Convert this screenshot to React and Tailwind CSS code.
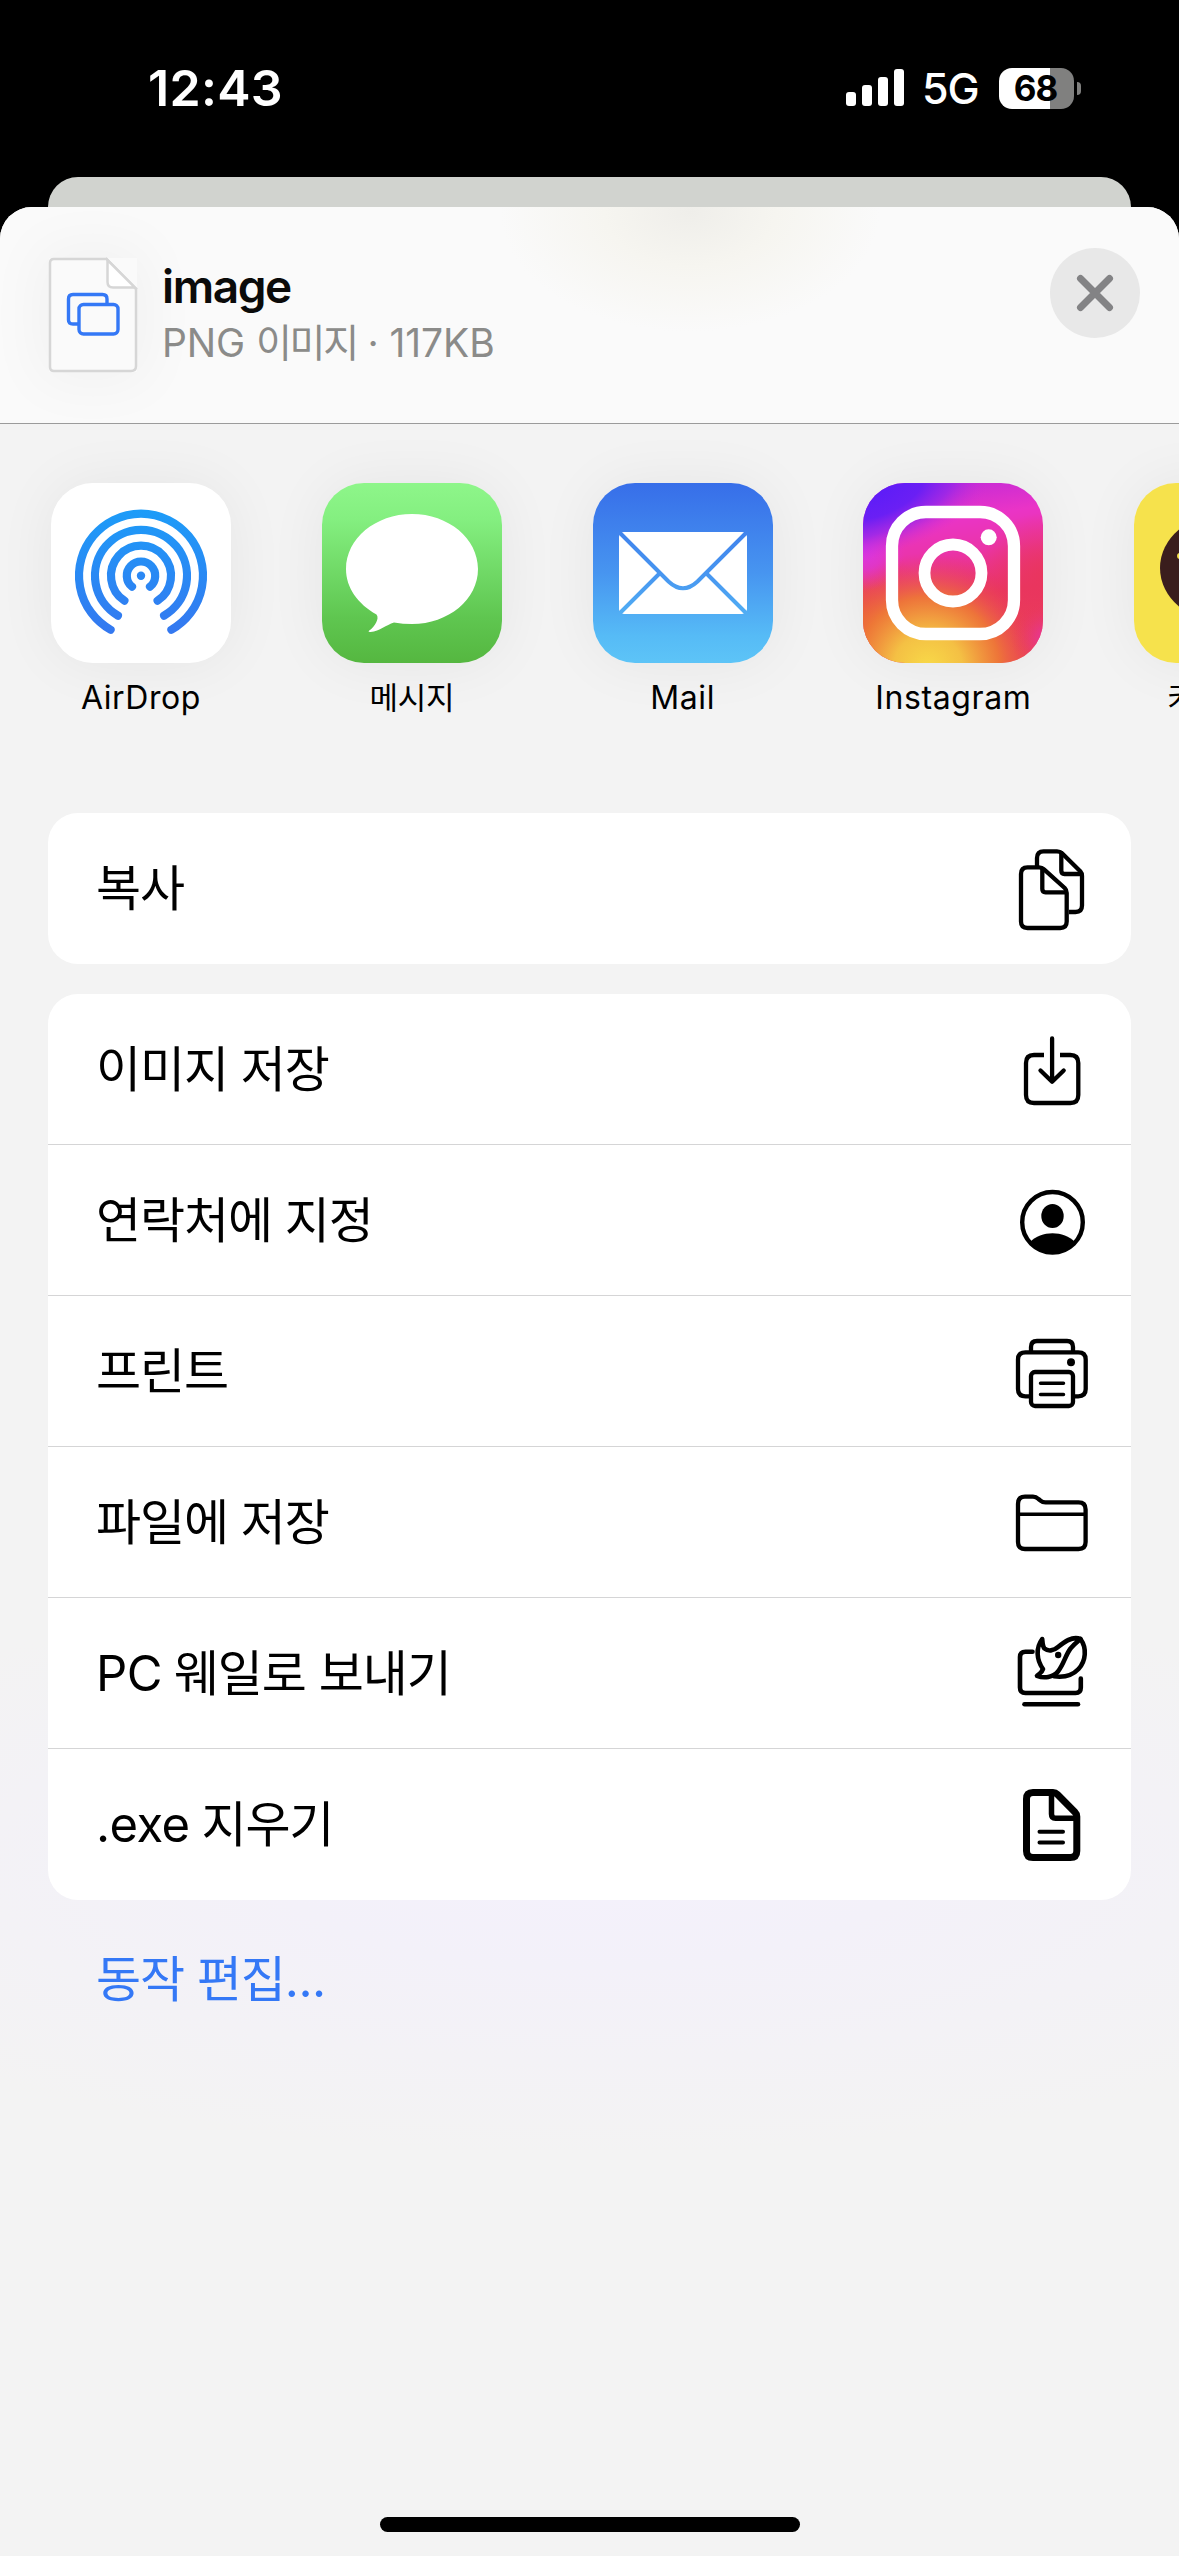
import React from "react";

const LATIN = "font-['Inter','Noto_Sans_CJK_KR',sans-serif]";
const KOREAN = "font-['Noto_Sans_CJK_KR',sans-serif]";

function StatusBar() {
  return (
    <div className="flex h-[177px] shrink-0 items-start justify-between pl-[148px] pr-[98px] pt-[62px] text-white">
      <div className="h-[52px] text-[50px] font-semibold leading-[52px] tracking-[0.3px]">12:43</div>
      <div className="flex h-[52px] items-center">
        <div className="mt-[-1px] flex h-[37px] items-end gap-[6px]">
          <span className="h-[14px] w-[10px] rounded-[3px] bg-white" />
          <span className="h-[21px] w-[10px] rounded-[3px] bg-white" />
          <span className="h-[29px] w-[10px] rounded-[3px] bg-white" />
          <span className="h-[37px] w-[10px] rounded-[3px] bg-white" />
        </div>
        <div className="ml-[18px] w-[57px] whitespace-nowrap text-[43px] font-[450] leading-[52px] tracking-[-1.2px]">5G</div>
        <div className="ml-[20px] flex h-[41px] w-[75px] items-center justify-center rounded-[13px] bg-[linear-gradient(to_right,#fff_51px,#80807f_51px)]">
          <span className="mr-[2px] text-[35px] font-bold leading-none tracking-[-1px] text-black">68</span>
        </div>
        <div className="ml-[3px] h-[13px] w-[4px] rounded-r-full bg-[#80807f]" />
      </div>
    </div>
  );
}

function FileThumb() {
  return (
    <svg className="size-full overflow-visible" viewBox="0 0 88 114" fill="none">
      <path
        d="M5 1H57.500L87 31V108Q87 113 82 113H5Q1 113 1 109V5Q1 1 5 1Z"
        fill="#fafafa"
        stroke="#d6d6d6"
        strokeWidth="2.500"
      />
      <path d="M58.500 2V24Q58.500 29.500 64 29.500H86Z" fill="#fff" stroke="#d6d6d6" strokeWidth="2.500" />
      <path d="M58 45V41Q58 36.500 53.500 36.500H24Q19.500 36.500 19.500 41V62Q19.500 66 24 66H29" stroke="#3478f6" strokeWidth="3.400" />
      <rect x="30" y="46.500" width="39" height="29.500" rx="4.500" stroke="#3478f6" strokeWidth="3.400" />
    </svg>
  );
}

function Header() {
  return (
    <div className="flex h-[217px] shrink-0 items-start border-b border-[#9b9b9b] bg-[radial-gradient(ellipse_190px_120px_at_690px_5px,#efeeea_0%,#f6f5f0_45%,rgba(250,250,250,0)_100%)] bg-[#fafafa] pl-[49px] pr-[39px]">
      <div className="mt-[51px] h-[114px] w-[88px] shadow-[0_0_60px_10px_rgba(0,0,0,0.04)]">
        <FileThumb />
      </div>
      <div className="ml-[25px] mt-[50px] flex-1">
        <div className="h-[60px] text-[46px] font-semibold leading-[58px] tracking-[-1.4px] text-[#0b0b0a]">image</div>
        <div className="h-[52px] whitespace-nowrap text-[39px] leading-[52px] tracking-[-0.1px] text-[#8b8b89]">
          PNG <span className="tracking-[-2.300px]">이미지</span> · 117KB
        </div>
      </div>
      <button className="mt-[41px] flex size-[90px] items-center justify-center rounded-full bg-[#e8e8e8]">
        <svg className="size-[38px]" viewBox="0 0 38 38" fill="none" stroke="#838385" strokeWidth="7" strokeLinecap="round">
          <path d="M4.500 4.500L33.500 33.500M33.500 4.500L4.500 33.500" />
        </svg>
      </button>
    </div>
  );
}

function AirDropIcon() {
  return (
    <svg className="size-full" viewBox="0 0 180 180" fill="none">
      <defs>
        <linearGradient id="air" gradientUnits="userSpaceOnUse" x1="0" y1="27" x2="0" y2="150">
          <stop offset="0" stopColor="#1d9cf8" />
          <stop offset="1" stopColor="#3478f0" />
        </linearGradient>
      </defs>
      <rect width="180" height="180" fill="#fff" />
      <g stroke="url(#air)" strokeWidth="8.200" strokeLinecap="round">
        <path d="M59.600 146.700A62 62 0 1 1 120.400 146.700" />
        <path d="M66.900 132.600A46 46 0 1 1 113.100 132.600" />
        <path d="M73.400 117.700A30 30 0 1 1 106.600 117.700" />
        <path d="M81 103.700A14.200 14.200 0 1 1 99 103.700" />
      </g>
      <circle cx="90" cy="92.700" r="4.200" fill="#2b88f4" />
    </svg>
  );
}

function MessagesIcon() {
  return (
    <svg className="size-full" viewBox="0 0 180 180">
      <defs>
        <linearGradient id="msg" x1="0" y1="0" x2="0" y2="1">
          <stop offset="0" stopColor="#8ef68a" />
          <stop offset="0.200" stopColor="#84ef80" />
          <stop offset="0.750" stopColor="#5fc650" />
          <stop offset="1" stopColor="#55b740" />
        </linearGradient>
      </defs>
      <rect width="180" height="180" fill="url(#msg)" />
      <path
        d="M90 31C126.500 31 156 55.600 156 86S126.500 141 90 141C84 141 78 140.500 72 139.500C64 142 58 148 48.500 149C46 149 46.500 148 48 147C52 144 58 136 54.500 131.500C36 121 24 105 24 86C24 55.600 53.500 31 90 31Z"
        fill="#fff"
      />
    </svg>
  );
}

function MailIcon() {
  return (
    <svg className="size-full" viewBox="0 0 180 180" fill="none">
      <defs>
        <linearGradient id="mail" gradientUnits="userSpaceOnUse" x1="0" y1="0" x2="0" y2="180">
          <stop offset="0" stopColor="#376ee9" />
          <stop offset="0.500" stopColor="#4795f0" />
          <stop offset="0.850" stopColor="#56bbf6" />
          <stop offset="1" stopColor="#5dc4f7" />
        </linearGradient>
      </defs>
      <rect width="180" height="180" fill="url(#mail)" />
      <rect x="26" y="49" width="128" height="82" rx="5" fill="#fff" />
      <path
        d="M26 49L75.500 98.500Q90 112 104.500 98.500L154 49M26 131L66.500 90.500M154 131L113.500 90.500"
        stroke="url(#mail)"
        strokeWidth="4"
      />
    </svg>
  );
}

function InstagramIcon() {
  return (
    <svg className="size-full" viewBox="0 0 180 180" fill="none">
      <defs>
        <linearGradient id="igBase" x1="0.350" y1="0" x2="0.500" y2="1">
          <stop offset="0" stopColor="#c32ad8" />
          <stop offset="0.220" stopColor="#ea34c6" />
          <stop offset="0.400" stopColor="#ea34a8" />
          <stop offset="0.650" stopColor="#e9355e" />
          <stop offset="1" stopColor="#ea4a50" />
        </linearGradient>
        <radialGradient id="igYellow" gradientUnits="userSpaceOnUse" cx="65" cy="185" r="115">
          <stop offset="0" stopColor="#f8da48" />
          <stop offset="0.300" stopColor="#f4c044" />
          <stop offset="0.620" stopColor="#ee7a36" stopOpacity="0.900" />
          <stop offset="1" stopColor="#e9355e" stopOpacity="0" />
        </radialGradient>
        <radialGradient id="igOrange" gradientUnits="userSpaceOnUse" cx="0" cy="135" r="70">
          <stop offset="0" stopColor="#ea6a2a" />
          <stop offset="1" stopColor="#e9355e" stopOpacity="0" />
        </radialGradient>
        <radialGradient
          id="igViolet"
          gradientUnits="userSpaceOnUse"
          cx="0"
          cy="0"
          r="1"
          gradientTransform="translate(8 8) rotate(-18) scale(135 66)"
        >
          <stop offset="0" stopColor="#5b1cf8" />
          <stop offset="0.400" stopColor="#6a1ff4" />
          <stop offset="0.650" stopColor="#9326ea" stopOpacity="0.800" />
          <stop offset="1" stopColor="#d82fd0" stopOpacity="0" />
        </radialGradient>
        <radialGradient id="igMagenta" gradientUnits="userSpaceOnUse" cx="0" cy="66" r="42">
          <stop offset="0" stopColor="#d837e6" />
          <stop offset="0.500" stopColor="#dc36da" stopOpacity="0.700" />
          <stop offset="1" stopColor="#e632cb" stopOpacity="0" />
        </radialGradient>
        <radialGradient id="igRed" gradientUnits="userSpaceOnUse" cx="180" cy="95" r="65">
          <stop offset="0" stopColor="#e9355e" />
          <stop offset="1" stopColor="#e9355e" stopOpacity="0" />
        </radialGradient>
        <radialGradient id="igPink" gradientUnits="userSpaceOnUse" cx="184" cy="155" r="36">
          <stop offset="0" stopColor="#e832a8" />
          <stop offset="1" stopColor="#e9355e" stopOpacity="0" />
        </radialGradient>
      </defs>
      <rect width="180" height="180" fill="url(#igBase)" />
      <rect width="180" height="180" fill="url(#igRed)" />
      <rect width="180" height="180" fill="url(#igOrange)" />
      <rect width="180" height="180" fill="url(#igYellow)" />
      <rect width="180" height="180" fill="url(#igMagenta)" />
      <rect width="180" height="180" fill="url(#igViolet)" />
      <rect width="180" height="180" fill="url(#igPink)" />
      <rect x="29" y="29" width="122" height="122" rx="34" stroke="#fff" strokeWidth="12.300" />
      <circle cx="90" cy="90" r="28.500" stroke="#fff" strokeWidth="11.800" />
      <circle cx="125.700" cy="54.300" r="8" fill="#fff" />
    </svg>
  );
}

function KakaoIcon() {
  return (
    <svg className="size-full" viewBox="0 0 180 180">
      <rect width="180" height="180" fill="#f6e24c" />
      <ellipse cx="90" cy="85" rx="64" ry="54" fill="#3a1d1d" />
      <path d="M58 130L54 156L84 137Z" fill="#3a1d1d" />
      <rect x="43" y="70" width="26" height="6" rx="3" fill="#f6e24c" />
    </svg>
  );
}

const apps = [
  { name: "AirDrop", Icon: AirDropIcon, label: "text-[32px] tracking-[0.6px]" },
  { name: "메시지", Icon: MessagesIcon, label: "text-[31px] tracking-[-0.3px]" },
  { name: "Mail", Icon: MailIcon, label: "text-[32px] tracking-[0.6px]" },
  { name: "Instagram", Icon: InstagramIcon, label: "text-[32px] tracking-[0.6px]" },
  { name: "카카오톡", Icon: KakaoIcon, label: "text-[31px] tracking-[-0.1px]" },
];

function AppRow() {
  return (
    <div className="flex h-[389px] shrink-0 gap-[90.800px] overflow-hidden pl-[51px] pt-[59px]">
      {apps.map(({ name, Icon, label }) => (
        <div key={name} className="flex w-[180px] shrink-0 flex-col items-center">
          <div className="size-[180px] rounded-[42px] shadow-[0_0_60px_rgba(0,0,0,0.06)]">
            <div className="size-full overflow-hidden rounded-[42px]">
              <Icon />
            </div>
          </div>
          <div className={`mt-[13px] h-[44px] whitespace-nowrap leading-[44px] text-black ${label}`}>{name}</div>
        </div>
      ))}
    </div>
  );
}

function Glyph({ children, width = 4.3 }) {
  return (
    <svg
      className="mt-[30px] size-[90px] shrink-0"
      viewBox="0 0 90 90"
      fill="none"
      stroke="#000"
      strokeWidth={width}
      strokeLinecap="round"
      strokeLinejoin="round"
    >
      {children}
    </svg>
  );
}

const CopyGlyph = () => (
  <Glyph>
    <path strokeLinecap="butt" d="M30 23V15Q30 8.300 36.500 8.300H50Q53 8.300 55 10.300L73.500 28.500Q75 30 75 33V62.500Q75 69 68.500 69H62" />
    <path d="M54.300 10V27.500Q54.300 31 57.500 31H74" />
    <path d="M20.500 24.300H32Q35 24.300 37 26.300L57.700 45Q59.700 47 59.700 50V78.500Q59.700 85 53.200 85H20.500Q14 85 14 78.500V31Q14 24.300 20.500 24.300Z" />
    <path d="M35.300 26V46Q35.300 49.300 38.500 49.300H59" />
  </Glyph>
);

const SaveGlyph = () => (
  <Glyph>
    <path strokeLinecap="butt" d="M37 31H27Q19 31 19 39V71Q19 79 27 79H63.300Q71.300 79 71.300 71V39Q71.300 31 63.300 31H53" />
    <path d="M45.100 14.500V57M33.500 46.500L45.100 57.700L56.700 46.500" />
  </Glyph>
);

const ContactGlyph = () => (
  <Glyph>
    <circle cx="45.500" cy="47.300" r="30.300" strokeWidth="4.400" />
    <ellipse cx="45.500" cy="41" rx="11.200" ry="12.100" fill="#000" stroke="none" />
    <path d="M23 67C34 55.300 57 55.300 68 67C57 83 34 83 23 67Z" fill="#000" stroke="none" />
  </Glyph>
);

const PrintGlyph = () => (
  <Glyph>
    <path d="M24 70.300H18.500Q11 70.300 11 63V33.500Q11 26.300 18.500 26.300H71.200Q78.700 26.300 78.700 33.500V63Q78.700 70.300 71.200 70.300H66" strokeLinecap="butt" />
    <path d="M24 26V21Q24 15 30 15H60Q66 15 66 21V26" strokeLinecap="butt" />
    <rect x="24" y="46" width="42" height="34" rx="4" />
    <path d="M33.500 57.300H56.500M33.500 68.400H56.500" strokeWidth="3.500" />
    <circle cx="64" cy="36.300" r="4" fill="#000" stroke="none" />
  </Glyph>
);

const FolderGlyph = () => (
  <Glyph>
    <path d="M11 27Q11 19.700 18 19.700H26Q29 19.700 31.500 22L33.500 23.700Q35.500 25.400 38.500 25.400H71.500Q78.600 25.400 78.600 32.500V65Q78.600 72 71.500 72H18Q11 72 11 65Z" />
    <path d="M11 37.300H78.600" strokeWidth="3.600" strokeLinecap="butt" />
  </Glyph>
);

const WhaleGlyph = () => (
  <Glyph width={4.6}>
    <path d="M25.500 23.700H18.500Q13 23.700 13 29V59.500Q13 65 18.500 65H68.500Q73.800 65 73.800 59.500V50.500" />
    <path d="M17.500 76.300H71" />
    <path d="M35.200 11C28.500 20 29.500 32 36 41C35 44.500 33 45.500 30 47.800C37 50.500 46 49.500 51 43.500C57 36 58.500 27 63.500 20.500C67 16.500 70 14 73.500 11C65.500 7.500 57 14 51 19C46.500 23 41 23.500 37.500 20.500C35.500 18.500 35.500 14 35.200 11Z" />
    <path d="M73.500 11C80 20 79 33 71.500 41C65 48 56 49.500 47 48.300" />
    <circle cx="51.200" cy="27" r="3.200" fill="#000" stroke="none" />
  </Glyph>
);

const DocGlyph = () => (
  <Glyph width={7}>
    <path d="M26 13.500H46Q48.500 13.500 50.500 15.500L67.800 33Q69.800 35 69.800 37.500V72Q69.800 78.500 63.300 78.500H26Q19.500 78.500 19.500 72V20Q19.500 13.500 26 13.500Z" />
    <path d="M44.500 14V35Q44.500 39.300 48.500 39.300H69" strokeWidth="5.500" />
    <path d="M32.500 52.800H56M32.500 63.400H56" strokeWidth="4" />
  </Glyph>
);

const actions = [
  { parts: [["ko", "이미지 저장"]], Icon: SaveGlyph },
  { parts: [["ko", "연락처에 지정"]], Icon: ContactGlyph },
  { parts: [["ko", "프린트"]], Icon: PrintGlyph },
  { parts: [["ko", "파일에 저장"]], Icon: FolderGlyph },
  { parts: [["en", "PC"], ["ko", "웨일로 보내기"]], Icon: WhaleGlyph },
  { parts: [["en", ".exe"], ["ko", "지우기"]], Icon: DocGlyph },
];

function Label({ parts }) {
  const mixed = parts.length > 1;
  return (
    <div
      className={
        mixed
          ? "mt-[37px] flex items-baseline gap-[12px] whitespace-nowrap leading-[70px]"
          : "mt-[37px] flex items-baseline whitespace-nowrap leading-[70px]"
      }
    >
      {parts.map(([lang, text]) => (
        <span
          key={text}
          className={
            lang === "ko"
              ? `${KOREAN} text-[49px] tracking-[-1.100px] [word-spacing:3px]`
              : `${LATIN} text-[49px] tracking-[-0.600px]`
          }
        >
          {text}
        </span>
      ))}
    </div>
  );
}

function Row({ parts, Icon, divided }) {
  return (
    <div
      className={
        divided
          ? "flex h-[151px] items-start justify-between border-b border-[#d5d5d6] pl-[48px] pr-[34px]"
          : "flex h-[151px] items-start justify-between pl-[48px] pr-[34px]"
      }
    >
      <Label parts={parts} />
      <Icon />
    </div>
  );
}

export default function App() {
  return (
    <div className={`flex h-[2556px] w-[1179px] flex-col overflow-hidden bg-black ${LATIN}`}>
      <StatusBar />
      <div className="mx-[48px] h-[30px] shrink-0 rounded-t-[30px] bg-[#d1d3cf]" />
      <div className="flex flex-1 flex-col overflow-hidden rounded-t-[32px] bg-[#f3f3f3] bg-[radial-gradient(ellipse_900px_290px_at_590px_1660px,#f4f1fc_0%,#f3f1f9_35%,rgba(243,243,243,0)_100%)]">
        <Header />
        <AppRow />
        <div className="mx-[48px] flex flex-col gap-[30px]">
          <div className="rounded-[30px] bg-white">
            <Row parts={[["ko", "복사"]]} Icon={CopyGlyph} />
          </div>
          <div className="rounded-[30px] bg-white">
            {actions.map((a, i) => (
              <Row key={i} {...a} divided={i < actions.length - 1} />
            ))}
          </div>
          <div className={`ml-[48px] mt-[10px] h-[72px] text-[49px] leading-[72px] tracking-[-1.100px] text-[#3478f6] [word-spacing:3px] ${KOREAN}`}>
            동작 편집<span className={`tracking-[-0.500px] ${LATIN}`}>...</span>
          </div>
        </div>
        <div className="mx-auto mb-[24px] mt-auto h-[15px] w-[420px] rounded-full bg-black" />
      </div>
    </div>
  );
}
